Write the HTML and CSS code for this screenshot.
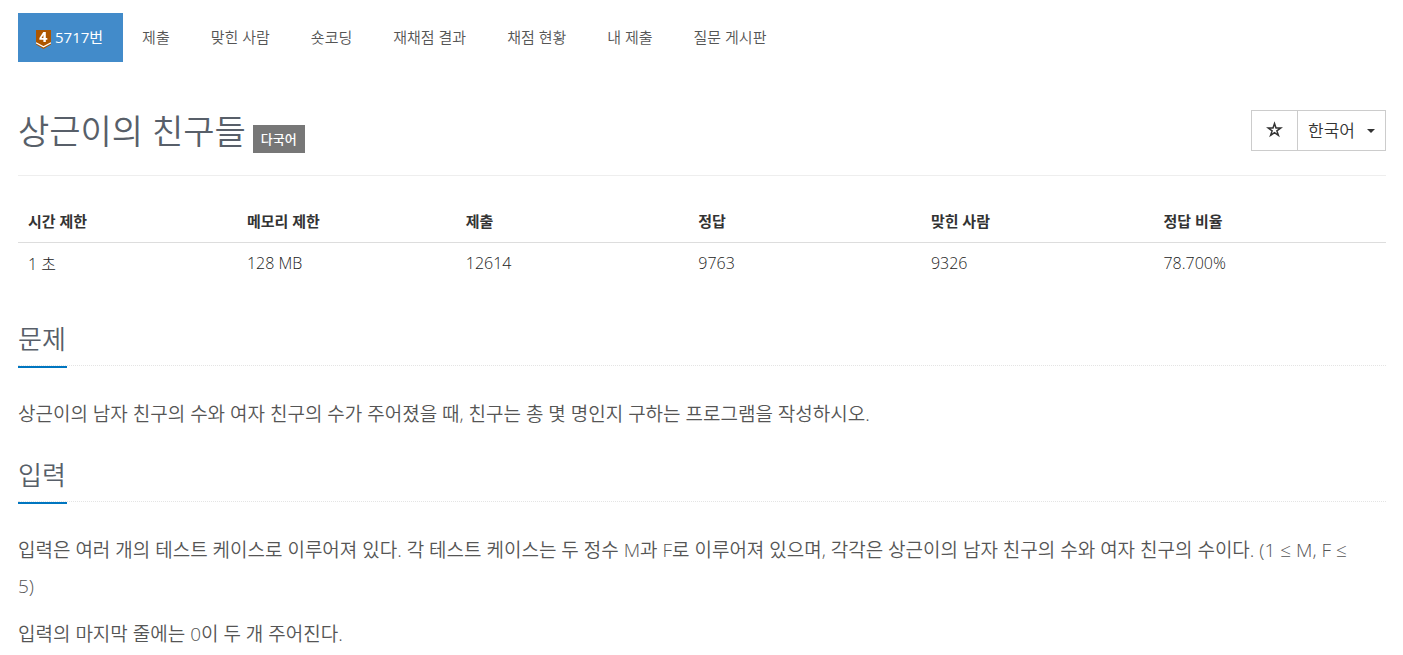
FILE: index.html
```html
<!DOCTYPE html>
<html lang="ko">
<head>
<meta charset="utf-8">
<title>5717번: 상근이의 친구들</title>
<link rel="stylesheet" href="styles.css">
</head>
<body>
<nav class="menu">
  <a class="menu-item active" href="#"><svg class="tier" viewBox="0 0 15 19" aria-hidden="true"><path fill="#ad5600" d="M0 0h15v14.500l-7.500 4.500-7.500-4.500z"/><path fill="none" stroke="#fff" stroke-width="1.300" d="M0 12.800l7.500 4 7.500-4"/><path fill="#fff" fill-rule="evenodd" d="M7.300 2h2.500v5.900h1.500v1.900H9.800V12H7.400V9.800H3.400V8zM7.400 4.900L5.500 7.900h1.900z"/></svg>5717번</a>
  <a class="menu-item" href="#">제출</a>
  <a class="menu-item" href="#">맞힌 사람</a>
  <a class="menu-item" href="#">숏코딩</a>
  <a class="menu-item" href="#">재채점 결과</a>
  <a class="menu-item" href="#">채점 현황</a>
  <a class="menu-item" href="#">내 제출</a>
  <a class="menu-item" href="#">질문 게시판</a>
</nav>
<header class="page-header">
  <h1 class="title">상근이의 친구들</h1>
  <span class="label">다국어</span>
  <div class="actions">
    <button class="btn" type="button" aria-label="즐겨찾기"><svg class="star" viewBox="0 0 17 17" aria-hidden="true"><path fill="none" stroke="#333" stroke-width="1.500" d="M8.500 2.600l1.500 4.500h4.700l-3.800 2.800 1.500 4.500-3.900-2.800-3.900 2.800 1.500-4.500L2.300 7.100H7z"/></svg></button>
    <button class="btn language" type="button">한국어<span class="caret"></span></button>
  </div>
</header>
<main>
  <table class="info">
    <thead><tr><th class="narrow">시간 제한</th><th class="narrow">메모리 제한</th><th>제출</th><th>정답</th><th>맞힌 사람</th><th>정답 비율</th></tr></thead>
    <tbody><tr><td>1 초</td><td>128 MB</td><td>12614</td><td>9763</td><td>9326</td><td>78.700%</td></tr></tbody>
  </table>
  <section class="section">
    <div class="headline"><h2>문제</h2></div>
    <p>상근이의 남자 친구의 수와 여자 친구의 수가 주어졌을 때, 친구는 총 몇 명인지 구하는 프로그램을 작성하시오.</p>
  </section>
  <section class="section">
    <div class="headline"><h2>입력</h2></div>
    <p>입력은 여러 개의 테스트 케이스로 이루어져 있다. 각 테스트 케이스는 두 정수 M과 F로 이루어져 있으며, 각각은 상근이의 남자 친구의 수와 여자 친구의 수이다. (1 ≤ M, F ≤ 5)</p>
    <p>입력의 마지막 줄에는 0이 두 개 주어진다.</p>
  </section>
</main>
</body>
</html>
```
FILE: styles.css
```css
* { box-sizing: border-box; }
body { margin: 0; padding: 13px 17px 0 18px; font-family: "Open Sans", "Noto Sans CJK KR", sans-serif; font-size: 15px; color: #333; background: #fff; }
.menu { display: flex; gap: 1px; }
.menu-item { display: flex; align-items: center; height: 49px; padding: 0 20px 3px; color: #555; font-size: 15px; font-weight: 350; text-decoration: none; }
.active { margin-right: -2px; background: #428bca; color: #fff; font-weight: 400; padding: 0 20px 3px 18px; }
.tier { width: 15px; height: 19px; margin: 7px 4px 0 0; }
.page-header { display: flex; align-items: center; margin-top: 40px; padding-bottom: 15px; border-bottom: 1px solid #eee; }
.title { margin: 0; font-size: 34px; line-height: 58px; font-weight: 350; color: #585f69; }
.label { margin: 16px 0 0 7px; padding: 0 8px; background: #777; color: #fff; font-size: 13px; line-height: 28px; font-weight: 500; }
.actions { display: flex; margin-left: auto; padding-bottom: 2px; }
.btn { display: flex; align-items: center; height: 41px; padding: 0 14px 2px; border: 1px solid #ccc; background: #fff; color: #333; font: inherit; font-size: 17px; font-weight: 350; }
.language { margin-left: -1px; padding: 0 10px 2px; }
.star { width: 17px; height: 17px; }
.caret { margin: 4px 0 0 12px; border: 4px solid transparent; border-top-color: #333; border-bottom: 0; }
.info { width: 100%; margin: 24px 0 32px; border-collapse: collapse; table-layout: fixed; }
.info th, .info td { height: 42px; padding: 0 10px; text-align: left; }
.info th { font-weight: 700; border-bottom: 1px solid #ddd; }
.info td { font-size: 16px; font-weight: 300; color: #222; }
.info .narrow { width: 16%; }
.section { margin-bottom: 20px; }
.headline { border-bottom: 1px dotted #e4e4e4; }
.headline h2 { display: inline-block; margin: 0 0 -3px; padding: 0 1px 4px 0; border-bottom: 2px solid #0076c0; font-size: 26px; line-height: 46px; font-weight: 350; color: #585f69; }
.section p { margin: 0 0 12px; padding-right: 24px; font-size: 19px; line-height: 36px; font-weight: 350; color: #555; }
.headline + p { margin-top: 30px; }
```
